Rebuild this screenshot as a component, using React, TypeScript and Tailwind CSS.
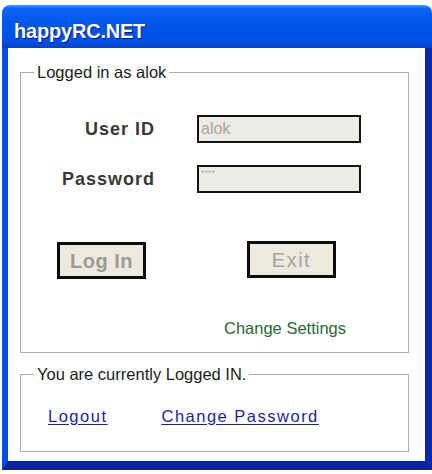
import React from "react";

const font = "font-['Liberation_Sans',Arial,sans-serif]";

const LoginDialog = () => {
  return (
    <div className={`w-[432px] h-[474px] bg-white pt-[5px] pl-[2px] ${font}`}>
      <div className="w-[430px] h-[465px] flex flex-col rounded-t-[8px] overflow-hidden">
        {/* Caption bar */}
        <div className="h-[43px] shrink-0 pl-[12px] pt-[16px] bg-[linear-gradient(180deg,#4a9aff_0%,#0e62f4_8%,#0055ea_45%,#0050e2_85%,#0840c8_100%)]">
          <span className="block text-[20px] leading-[20px] font-bold text-white tracking-[-0.2px] [text-shadow:1px_1px_0_#0a1860]">
            happyRC.NET
          </span>
        </div>

        {/* Client area inside the frame */}
        <div className="flex-1 bg-white border-l-[6px] border-r-[7px] border-b-[9px] border-l-[#0a4ee0] border-r-[#0a28a8] border-b-[#0a24a0] pl-[12px]">
          <div className="h-full border-b-[4px] border-b-[#f7f4e2]">
            <fieldset className="mt-[15px] w-[389px] h-[290px] border border-[#aeafa8]">
              <legend className="ml-[13px] px-[3px] text-[16.5px] leading-[19px] text-[#1c1c1c]">
                Logged in as alok
              </legend>

              <div className="mt-[33px] grid grid-cols-[134px_164px] gap-x-[42px] gap-y-[22px] items-center">
                <span className="text-right text-[18px] font-bold tracking-[1px] text-[#383838]">
                  User ID
                </span>
                <div className="h-[28px] border-2 border-[#141414] bg-[#ecebe5] pl-[2px] flex items-center text-[16px] text-[#a8a69e]">
                  alok
                </div>
                <span className="text-right text-[18px] font-bold tracking-[1px] text-[#383838]">
                  Password
                </span>
                <div className="h-[28px] border-2 border-[#141414] bg-[#ecebe5] pl-[2px] pt-[2px] text-[9px] leading-none text-[#b4b2aa]">
                  ****
                </div>
              </div>

              <div className="mt-[49px] ml-[36px] flex items-start gap-[101px]">
                <button className="w-[89px] h-[37px] border-[3px] border-[#0c0c0c] bg-[#ece9df] text-[20px] font-bold tracking-[0.5px] text-[#9c9b94] leading-none">
                  Log In
                </button>
                <button className="-mt-px w-[89px] h-[37px] border-[3px] border-[#0c0c0c] bg-[#ece9df] text-[20px] tracking-[1.5px] text-[#a5a49d] leading-none">
                  Exit
                </button>
              </div>

              <div className="mt-[40px] ml-[203px] text-[16.5px] leading-[19px] text-[#2b6638]">
                Change Settings
              </div>
            </fieldset>

            <fieldset className="mt-[12px] w-[389px] h-[87px] border border-[#aeafa8]">
              <legend className="ml-[13px] px-[3px] text-[16.5px] leading-[19px] text-[#1c1c1c]">
                You are currently Logged IN.
              </legend>
              <div className="mt-[23px] ml-[27px] flex gap-[54px] text-[16.5px] leading-[19px] tracking-[1.5px] text-[#1d1f9c] underline underline-offset-[2px]">
                <a href="#">Logout</a>
                <a href="#">Change Password</a>
              </div>
            </fieldset>
          </div>
        </div>
      </div>
    </div>
  );
};

export default function App() {
  return <LoginDialog />;
}
